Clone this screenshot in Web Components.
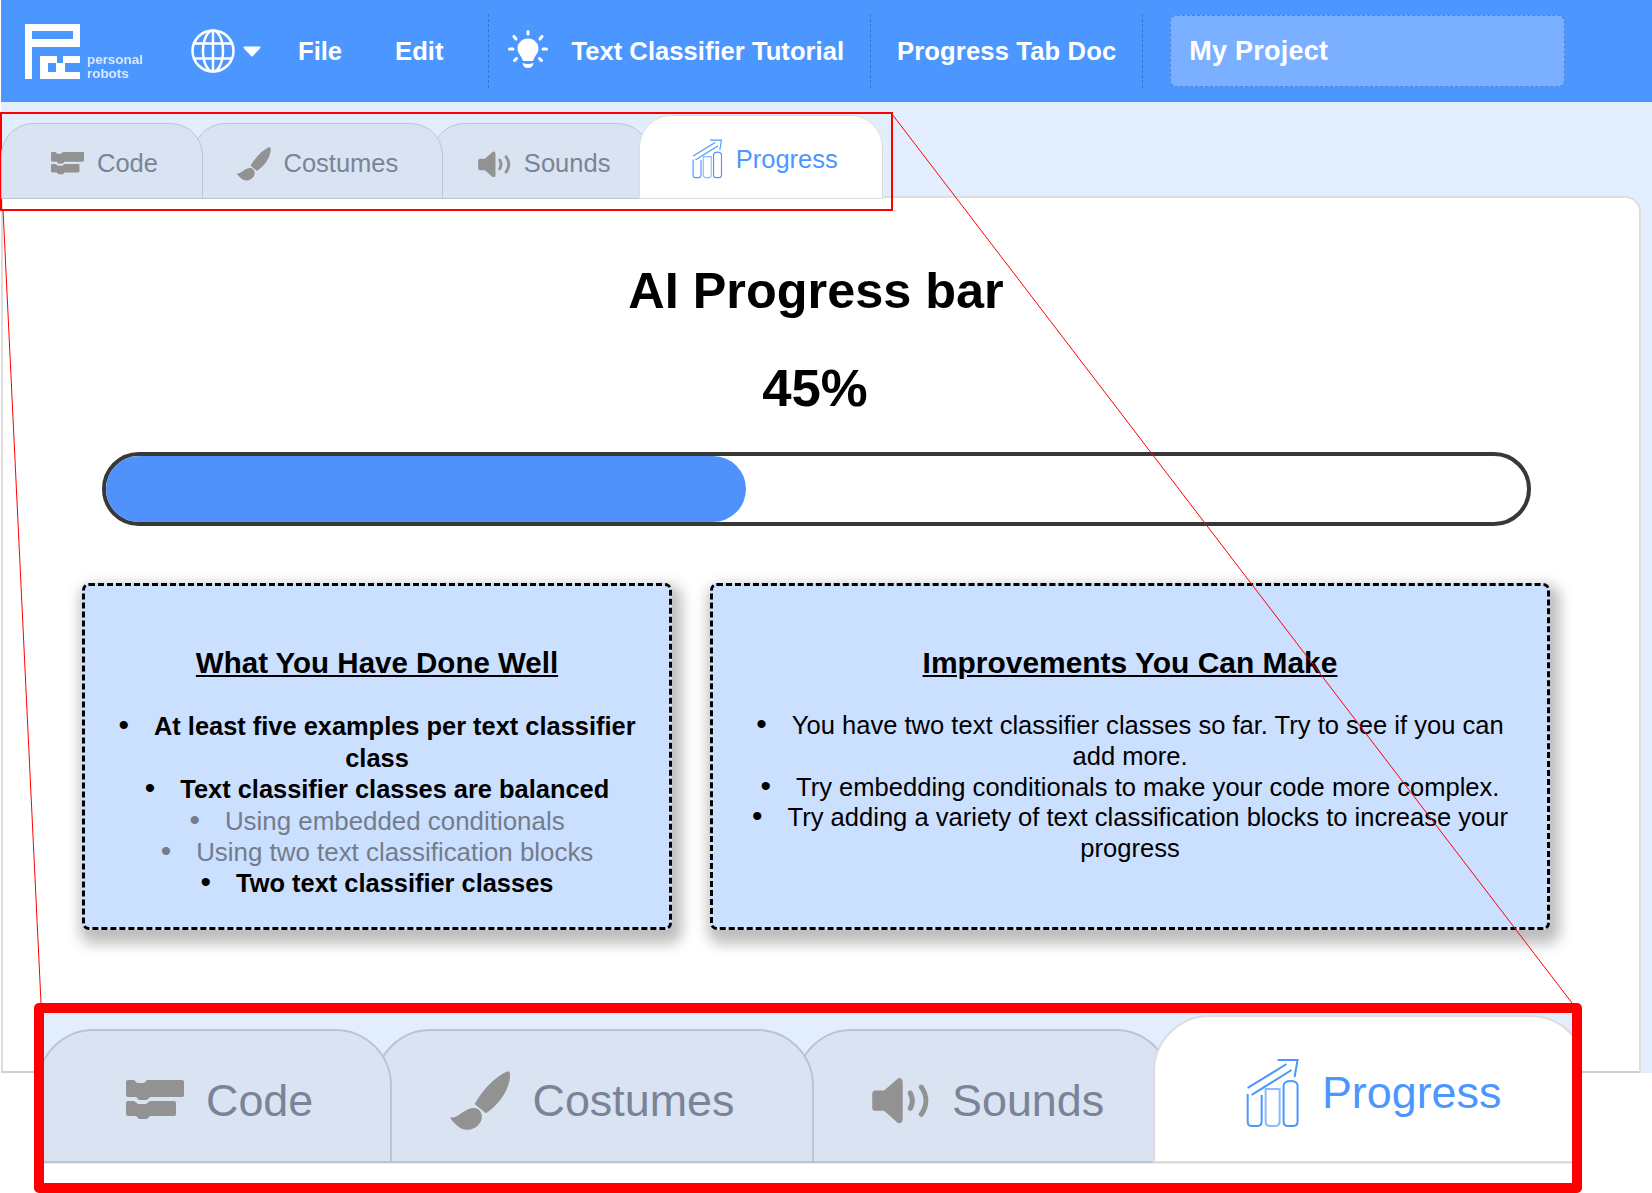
<!DOCTYPE html>
<html><head><meta charset="utf-8"><title>AI Progress</title>
<style>
html,body{margin:0;padding:0;background:#fff;font-family:"Liberation Sans",Arial,sans-serif}
pr-app{width:1652px;height:1193px}
</style></head><body>
<pr-app>
  <pr-navbar></pr-navbar>
  <pr-workspace>
    <pr-tab-strip slot="tabs" style="font-size:25.2px">
      <pr-tab icon="code" pad="1.96" w="8.02" z="4">Code</pr-tab>
      <pr-tab icon="brush" pad="1.68" w="9.94" z="3">Costumes</pr-tab>
      <pr-tab icon="sound" pad="1.78" w="8.635" z="2">Sounds</pr-tab>
      <pr-tab icon="progress" pad="2.01" w="9.655" z="5" active>Progress</pr-tab>
    </pr-tab-strip>
    <pr-panel>
      <pr-progress value="45"></pr-progress>
      <pr-cards>
        <pr-card heading="What You Have Done Well" style="--lh:31.7px;--mt:1px;--hs:29.5px">
          <li class="b">At least five examples per text classifier class</li>
          <li class="b">Text classifier classes are balanced</li>
          <li class="g">Using embedded conditionals</li>
          <li class="g">Using two text classification blocks</li>
          <li class="b">Two text classifier classes</li>
        </pr-card>
        <pr-card heading="Improvements You Can Make" style="--lh:30.8px;--mt:0px;--hs:29.95px">
          <li>You have two text classifier classes so far. Try to see if you can add more.</li>
          <li>Try embedding conditionals to make your code more complex.</li>
          <li>Try adding a variety of text classification blocks to increase your progress</li>
        </pr-card>
      </pr-cards>
    </pr-panel>
  </pr-workspace>
  <pr-callout slot="over" frame="small"></pr-callout>
  <pr-callout slot="over" frame="large">
    <pr-tab-strip style="font-size:44.3px;margin:2px 0 0 -7px;width:1600px">
      <pr-tab icon="code" pad="1.96" w="8.02" z="4">Code</pr-tab>
      <pr-tab icon="brush" pad="1.65" w="9.94" z="3">Costumes</pr-tab>
      <pr-tab icon="sound" pad="1.68" w="8.49" z="2">Sounds</pr-tab>
      <pr-tab icon="progress" pad="2.0" w="9.8" z="5" active>Progress</pr-tab>
    </pr-tab-strip>
  </pr-callout>
  <pr-connectors slot="over"></pr-connectors>
</pr-app>
<script>
const ICONS={
 code:`<svg viewBox="0 0 58 42" style="width:1.31em;height:.95em"><path fill="#929292" d="M2 0h6l3 3h7l3-3h35a2 2 0 0 1 2 2v13a2 2 0 0 1-2 2H24l-3 3h-8l-3-3H2a2 2 0 0 1-2-2V2a2 2 0 0 1 2-2zM2 21h6l4 3h8l4-3h24a2 2 0 0 1 2 2v11a2 2 0 0 1-2 2H24l-3 3h-8l-3-3H2a2 2 0 0 1-2-2V23a2 2 0 0 1 2-2z"/></svg>`,
 brush:`<svg viewBox="0 0 60 58" style="width:1.39em;height:1.35em"><path fill="#929292" d="M57 0C60 0 60 4 59 9 56 22 48 33 36 41L25 32C33 18 44 6 57 0zM23 36C30 35 34 42 31 49 27 57 16 60 9 54 4 50 2 47 1 45 8 47 14 37 23 36z"/></svg>`,
 sound:`<svg viewBox="0 0 34 28" style="width:1.31em;height:1.07em"><path fill="#929292" d="M0 10a2 2 0 0 1 2-2h5L15 1c1-1 3 0 3 2v22c0 2-2 3-3 2L7 20H2a2 2 0 0 1-2-2z"/><path fill="none" stroke="#929292" stroke-width="3" stroke-linecap="round" d="M22.5 9.5c1.600 3 1.600 6 0 9M29 6c3.500 5 3.500 11 0 16"/></svg>`,
 progress:`<svg viewBox="0 0 53 71" style="width:1.27em;height:1.6em"><g fill="none" stroke="#4c97ff" stroke-width="2"><path d="M2 36V63q0 5 3.500 5H12q4 0 4-5V37"/><path d="M20 31H34V63q0 5-4 5H24q-4 0-4-5z" stroke-opacity=".65"/><path d="M38 27q1-4 7-4t7 4V63q0 5-4 5H42q-4 0-4-5z"/><path d="M2 30 41 6M6 37 46 12M32 2H52L49 19"/></g></svg>`
};
function def(name,html){
  customElements.define(name,class extends HTMLElement{
    connectedCallback(){ if(this.shadowRoot)return; const s=this.attachShadow({mode:'open'}); s.innerHTML=typeof html==='function'?html(this):html; }
  });
}
def('pr-app',`<style>:host{display:block;position:relative;overflow:hidden;background:#fff;padding-left:1px;box-sizing:border-box}</style><slot></slot><slot name="over"></slot>`);
def('pr-navbar',`<style>
:host{display:flex;align-items:center;height:102px;background:#4c97ff;color:#fff;font:bold 25.6px "Liberation Sans",Arial,sans-serif;white-space:nowrap}
.logo{display:flex;align-items:flex-end;margin-left:24px;width:118px;flex:none}
.logo svg{width:55px;height:55px;display:block;filter:blur(.4px)}
.logo div{font-size:13.6px;line-height:14px;margin:0 0 -2px 7px;color:#ffffffc8;letter-spacing:-.1px;font-weight:bold;filter:blur(.3px)}
.globe{margin-left:48px;display:block}.caret{margin-left:8px;display:block}
.file{margin-left:37px}.edit{margin-left:53px}
.div{width:0;height:74px;border-left:1px dashed #2f74d6;flex:none}
.bulb{margin-left:18px;display:block}
.tut{margin-left:22px;letter-spacing:.02px}.doc{margin-left:26px;letter-spacing:.13px}
.proj{box-sizing:border-box;margin-left:27px;width:395px;height:72px;background:#7ab0ff;border:1px dashed #4a82d4;border-radius:7px;padding-left:18px;display:flex;align-items:center;font-size:27px;letter-spacing:.25px}
</style>
<div class="logo"><svg viewBox="25 23 55 55"><path fill="#fff" fill-rule="evenodd" d="M25 23H80V46H32V78H25ZM32 30V38H73V30ZM40 55H57V62H63V55H80V62H65V71H80V78H40ZM48 62V71H56V62Z"/></svg><div>personal<br>robots</div></div>
<svg class="globe" width="44" height="44" viewBox="0 0 44 44" fill="none" stroke="#fff" stroke-width="2.5"><circle cx="22" cy="22" r="20.500"/><ellipse cx="22" cy="22" rx="10" ry="20.500"/><path d="M22 1.500V42.500M3.500 14.500H40.500M3.500 29.500H40.500"/></svg>
<svg class="caret" width="18" height="11" viewBox="0 0 18 11"><path fill="#fff" stroke="#fff" stroke-width="2" stroke-linejoin="round" d="M1.500 1.500H16.500L9 9.500Z"/></svg>
<span class="file">File</span><span class="edit">Edit</span>
<span class="div" style="margin-left:45px"></span>
<svg class="bulb" width="42" height="42" viewBox="0 0 42 42"><g fill="#fff"><path d="M21 8.500c-6 0-10.500 4.500-10.500 10 0 4 2.500 6.500 4 9 .8 1.300 1 2.500 1.500 3.500h10c.5-1 .7-2.200 1.500-3.500 1.500-2.500 4-5 4-9 0-5.500-4.500-10-10.500-10z"/><path d="M15.500 33c3.500 1.200 7.500 1.200 11 0-.5 3.500-2.500 5-5.500 5s-5-1.500-5.500-5z"/></g><g stroke="#fff" stroke-width="3" stroke-linecap="round"><path d="M21 1.500V4M2.500 19H6M36 19H39.500M7 6.500 9 9M35 6.500 33 9M7.500 30.500 9.500 28.500M34.500 30.500 32.500 28.500"/></g></svg>
<span class="tut">Text Classifier Tutorial</span>
<span class="div" style="margin-left:26px"></span>
<span class="doc">Progress Tab Doc</span>
<span class="div" style="margin-left:26px"></span>
<div class="proj">My Project</div>`);
def('pr-workspace',`<style>:host{display:block;box-sizing:border-box;height:971px;background:#e2eefe;padding:13px 11px 0 0}
.tabs{position:relative;z-index:1}</style><div class="tabs"><slot name="tabs"></slot></div><slot></slot>`);
def('pr-tab-strip',`<style>:host{display:flex;align-items:flex-end;font-family:"Liberation Sans",Arial,sans-serif}</style><slot></slot>`);
def('pr-tab',el=>{const a=el.hasAttribute('active');return `<style>
:host{display:flex;align-items:center;gap:.5em;box-sizing:border-box;flex:none;position:relative;width:${el.getAttribute('w')}em;height:${a?3.33:3.02}em;margin-left:${el.getAttribute('icon')=='code'?0:'-.42em'};padding:${a?'.214em':'.25em'} 0 0 ${el.getAttribute('pad')}em;z-index:${el.getAttribute('z')};
background:${a?'#fff':'#d9e3f2'};border:solid ${a?'#dcdcdc':'#b9c4d4'};border-width:.06em;border-radius:1.28em 1.28em 0 0;color:${a?'#4c97ff':'#7a8398'};line-height:1}
svg{display:block;flex:none}span{font-size:1.013em}</style>${ICONS[el.getAttribute('icon')]}<span><slot></slot></span>`});
def('pr-panel',`<style>:host{display:block;box-sizing:border-box;height:877px;margin-top:-3px;background:#fff;border:2px solid #dedede;border-bottom-color:#cfcfcf;border-radius:0 16px 0 0;padding:63px 88px 0 79px}
h1{margin:0;padding-right:1px;text-align:center;font:bold 50.4px/60px "Liberation Sans",Arial,sans-serif;color:#000}</style><h1>AI Progress bar</h1><slot></slot>`);
def('pr-progress',el=>`<style>:host{display:block}
h2{margin:37px 0 34px;padding-right:3px;text-align:center;font:bold 52.7px/60px "Liberation Sans",Arial,sans-serif;color:#000}
.bar{box-sizing:border-box;height:74px;margin:0 20px 57px 20px;border:4px solid #383838;border-radius:37px;background:#fff;overflow:hidden}
.fill{height:100%;width:${el.getAttribute('value')==45?640:0}px;background:#5092fb;border-radius:0 35px 35px 0}
</style><h2>${el.getAttribute('value')}%</h2><div class="bar"><div class="fill"></div></div>`);
def('pr-cards',`<style>:host{display:grid;grid-template-columns:590px 840px;gap:38px}</style><slot></slot>`);
def('pr-card',el=>`<style>:host{display:block;box-sizing:border-box;height:347px;background:#cbdfff;border:3px dashed #000;border-radius:7px;box-shadow:4px 8px 14px 6px rgba(0,0,0,.26);padding:60px 30px 0;text-align:center;color:#000;font-family:"Liberation Sans",Arial,sans-serif}
h3{margin:0 0 30px;font:bold var(--hs)/34px "Liberation Sans",Arial,sans-serif;text-decoration:underline}
ul{list-style:none;margin:0;padding:var(--mt) 0 0;font-size:25.55px;line-height:var(--lh)}
::slotted(li){display:block}
::slotted(li.b){font-weight:bold;font-size:25.42px}
::slotted(li.g){color:#737c8c;line-height:31px;font-size:25.9px}
</style><h3>${el.getAttribute('heading')}</h3><ul><slot></slot></ul>`);
def('pr-callout',el=>{const big=el.getAttribute('frame')=='large';return big?`<style>:host{position:absolute;left:34px;top:1003px;width:1548px;height:190px;box-sizing:border-box;border:10px solid #f00;border-radius:5px;overflow:hidden;background:#e2eefe}
.w{position:absolute;left:0;right:0;bottom:0;height:19px;background:#fff}</style><slot></slot><div class="w"></div>`:`<style>:host{position:absolute;left:0;top:112px;width:893px;height:99px;box-sizing:border-box;border:2px solid #f00;pointer-events:none}</style>`});
def('pr-connectors',`<style>:host{position:absolute;left:0;top:0}svg{display:block}</style><svg width="1652" height="1193"><path d="M3 209 41 1003M892 114 1572 1003" stroke="#f00" fill="none"/></svg>`);
document.querySelectorAll('pr-card li').forEach(li=>{const s=document.createElement('span');s.textContent='•';s.style.cssText='display:inline-block;margin-right:25px;font-weight:normal;font-size:30px;line-height:0';li.prepend(s);});
</script>
</body></html>
